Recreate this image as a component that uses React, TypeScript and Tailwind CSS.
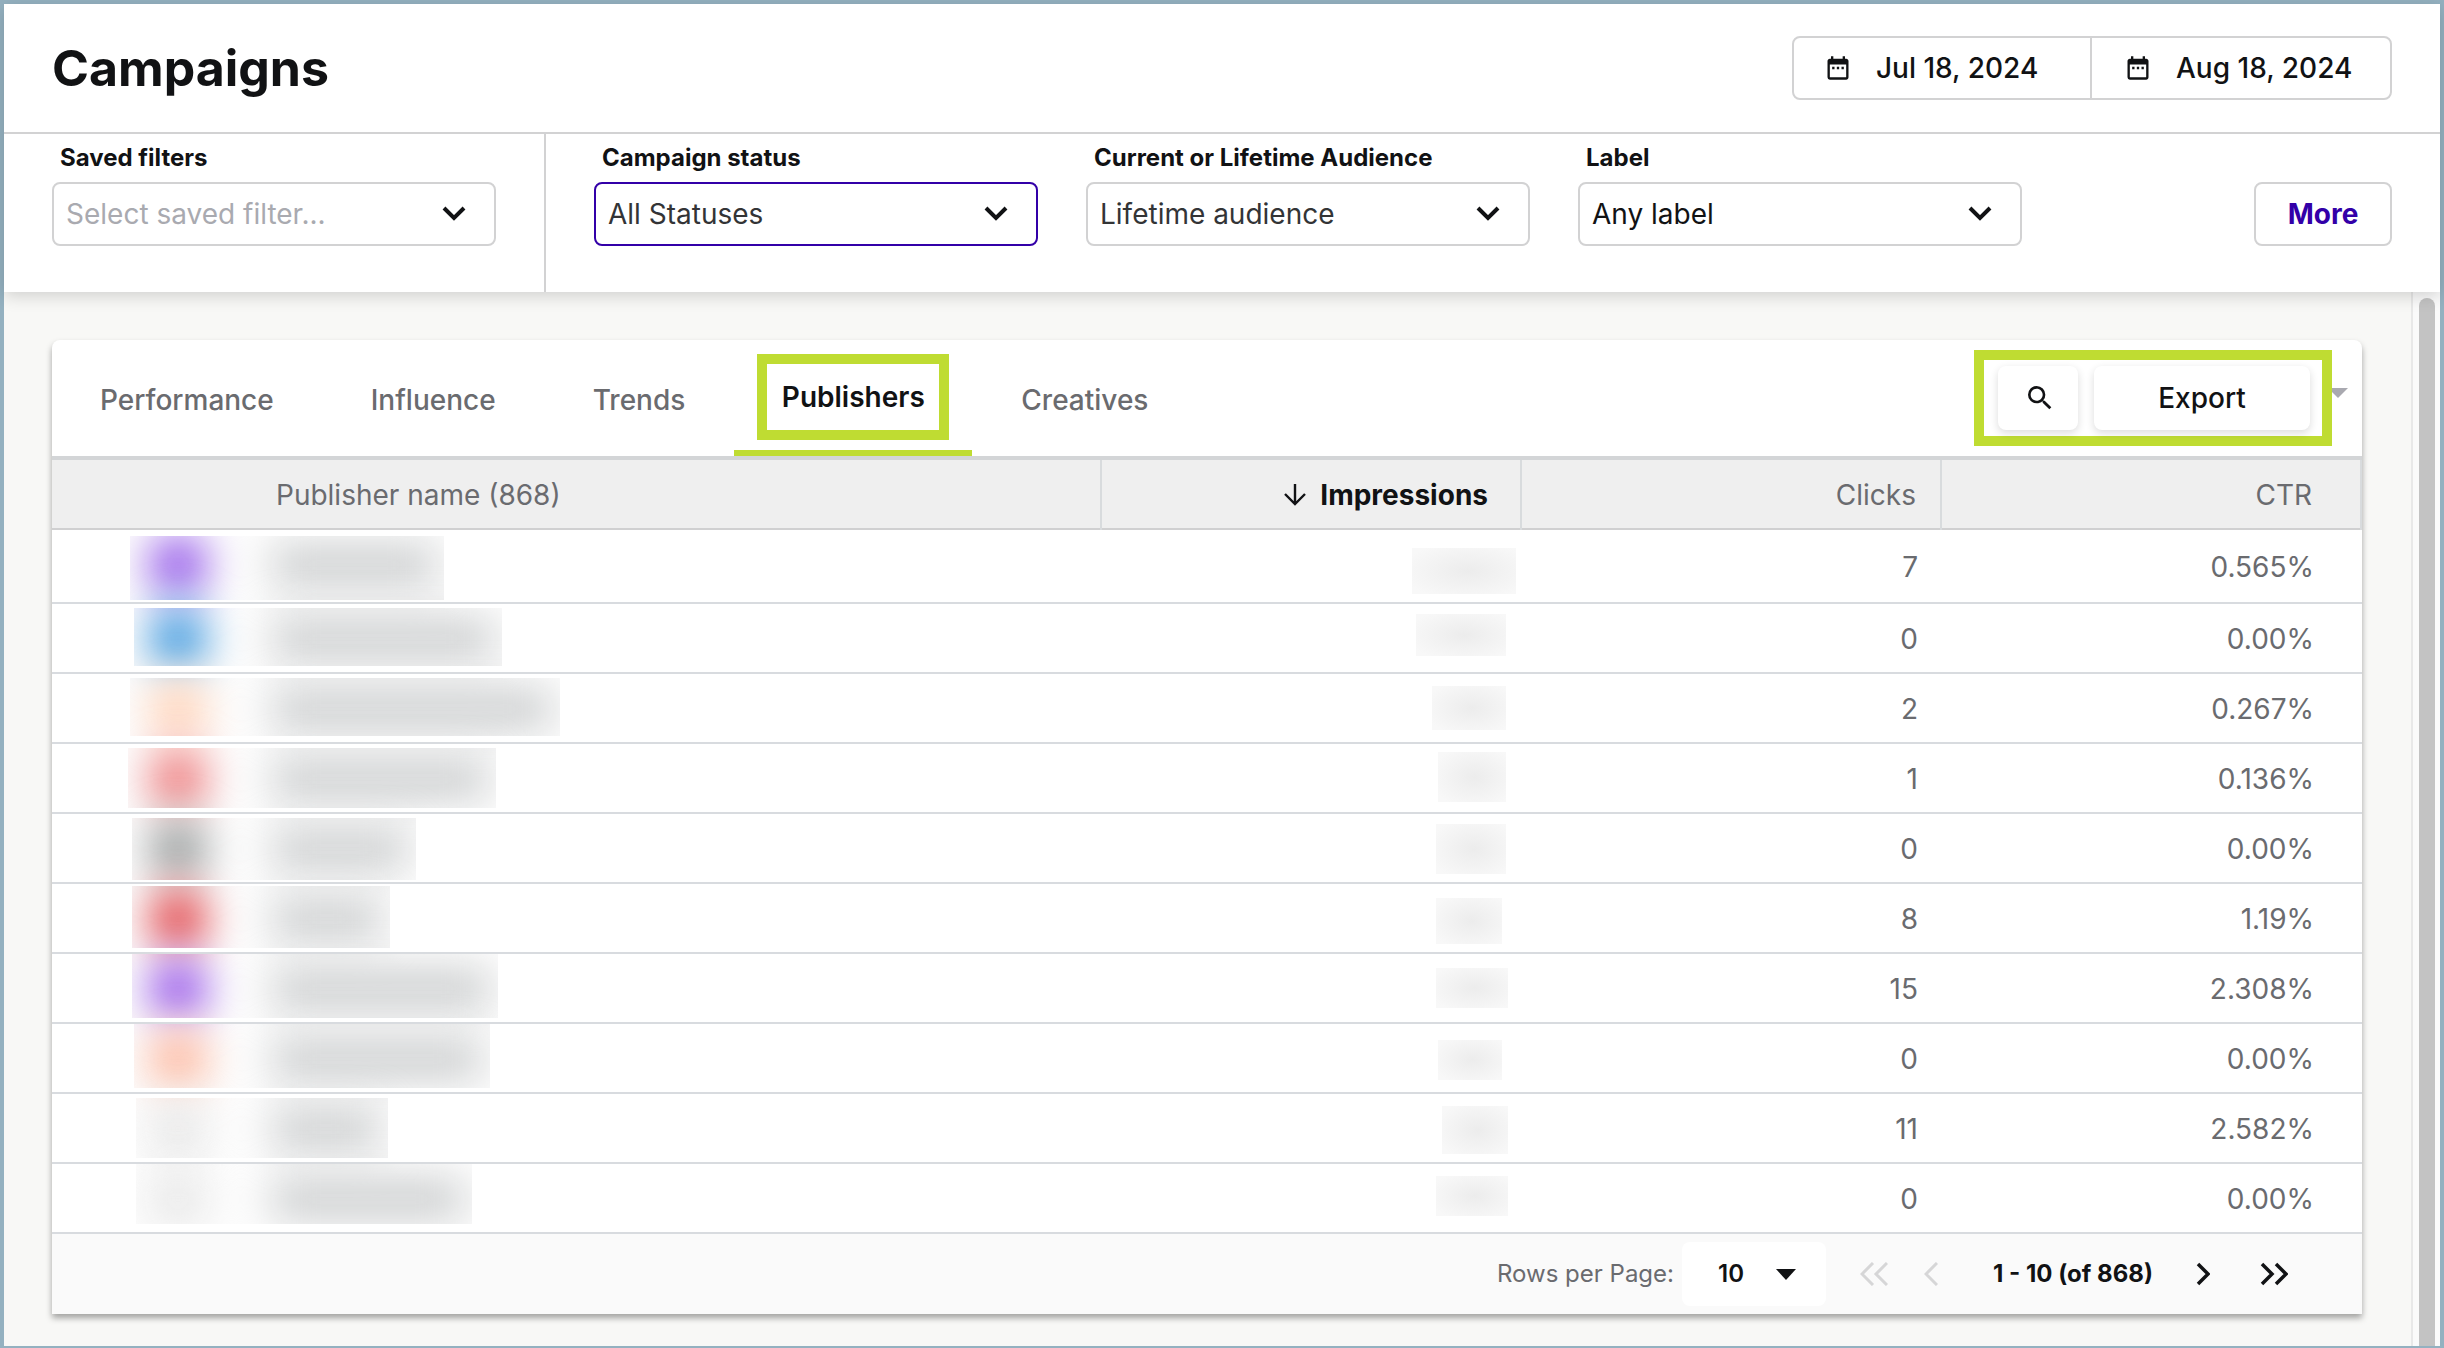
import { useId } from "react";
import { MdDateRange, MdSearch } from "react-icons/md";

const tabs = ["Performance", "Influence", "Trends", "Publishers", "Creatives"];

// Each patch is [left, top, width, height] inside its cell
type Patch = [number, number, number, number];

type Row = {
  avatar: string;
  height: string;
  name: Patch;
  impressions: Patch;
  clicks: string;
  ctr: string;
};

const rows: Row[] = [
  { avatar: "#9a62ea", height: "h-[74px]", name: [78, 6, 314, 64], impressions: [10, 18, 104, 46], clicks: "7", ctr: "0.565%" },
  { avatar: "#4a9fe0", height: "h-[70px]", name: [82, 4, 368, 58], impressions: [14, 10, 90, 42], clicks: "0", ctr: "0.00%" },
  { avatar: "#ffd6bd", height: "h-[70px]", name: [78, 4, 430, 58], impressions: [30, 12, 74, 44], clicks: "2", ctr: "0.267%" },
  { avatar: "#ee8385", height: "h-[70px]", name: [76, 4, 368, 60], impressions: [36, 8, 68, 50], clicks: "1", ctr: "0.136%" },
  { avatar: "#9fa3a3", height: "h-[70px]", name: [80, 4, 284, 62], impressions: [34, 10, 70, 50], clicks: "0", ctr: "0.00%" },
  { avatar: "#e25055", height: "h-[70px]", name: [80, 2, 258, 62], impressions: [34, 14, 66, 46], clicks: "8", ctr: "1.19%" },
  { avatar: "#9e62ea", height: "h-[70px]", name: [80, 0, 366, 64], impressions: [34, 14, 72, 40], clicks: "15", ctr: "2.308%" },
  { avatar: "#fdbda6", height: "h-[70px]", name: [82, 0, 356, 64], impressions: [36, 16, 64, 40], clicks: "0", ctr: "0.00%" },
  { avatar: "#e9e9e9", height: "h-[70px]", name: [84, 4, 252, 60], impressions: [40, 12, 66, 48], clicks: "11", ctr: "2.582%" },
  { avatar: "#e9e9e9", height: "h-[68px]", name: [84, 0, 336, 60], impressions: [34, 12, 72, 40], clicks: "0", ctr: "0.00%" },
];

function ChevronDown() {
  return (
    <svg viewBox="0 0 24 16" className="pointer-events-none absolute right-[30px] top-6 h-4 w-6" fill="none" stroke="#111214" strokeWidth="4">
      <path d="M2 2l10 10L22 2" />
    </svg>
  );
}

type FilterProps = {
  id: string;
  label: string;
  value: string;
  tone?: string;
  border?: string;
};

function Filter({ id, label, value, tone = "text-[#333436]", border = "border-[#d2d2d3]" }: FilterProps) {
  return (
    <div className="w-[444px]">
      <label htmlFor={id} className="block h-12 pl-2 pt-2 text-2xl font-bold text-[#111214]">
        {label}
      </label>
      <div className="relative">
        <select id={id} className={`h-16 w-full appearance-none rounded-lg border-2 bg-white pl-3 pr-16 text-[28px] ${tone} ${border}`}>
          <option>{value}</option>
        </select>
        <ChevronDown />
      </div>
    </div>
  );
}

// Blurred publisher logo and name; neighbouring logos bleed into the patch
function HiddenName({ index }: { index: number }) {
  const id = useId();
  const [x, y, w, h] = rows[index].name;
  const around = [index - 1, index, index + 1].filter((i) => rows[i]);
  return (
    <svg width="520" height="70" className="block" aria-hidden="true">
      <defs>
        <clipPath id={`${id}c`}>
          <rect x={x} y={y} width={w} height={h} />
        </clipPath>
        <filter
          id={`${id}b`}
          filterUnits="userSpaceOnUse"
          x="-20"
          y="-140"
          width="640"
          height="350"
          colorInterpolationFilters="sRGB"
        >
          <feGaussianBlur stdDeviation="20" />
        </filter>
      </defs>
      <g clipPath={`url(#${id}c)`}>
        <rect x={x} y={y} width={w} height={h} fill="#fdfdfd" />
        {around.map((i) => (
          <g key={i} filter={`url(#${id}b)`}>
            <circle cx="126" cy={35 + (i - index) * 70} r="31" fill={rows[i].avatar} />
            <rect x="220" y={15 + (i - index) * 70} width={rows[i].name[0] + rows[i].name[2] - 228} height="40" fill="#cccecf" />
          </g>
        ))}
      </g>
    </svg>
  );
}

function HiddenNumber({ patch }: { patch: Patch }) {
  const id = useId();
  const [x, y, w, h] = patch;
  return (
    <svg width="120" height="68" className="ml-auto block" aria-hidden="true">
      <radialGradient id={id} cx="54%" cy="50%" r="64%">
        <stop offset="0" stopColor="#ececec" />
        <stop offset="1" stopColor="#f8f8f8" />
      </radialGradient>
      <rect x={x} y={y} width={w} height={h} fill={`url(#${id})`} />
    </svg>
  );
}

function Header() {
  return (
    <header className="flex h-[130px] items-center justify-between border-b-2 border-[#d2d2d3] px-12">
      <h1 className="text-[50px] font-bold text-[#111214]">Campaigns</h1>
      <div className="flex h-16 rounded-lg border-2 border-[#d2d2d3] text-[28px] font-medium text-[#111214]">
        <button className="flex w-[298px] items-center gap-6 border-r-2 border-[#d2d2d3] pl-[30px]">
          <MdDateRange size={28} />
          Jul 18, 2024
        </button>
        <button className="flex w-[298px] items-center gap-6 pl-8">
          <MdDateRange size={28} />
          Aug 18, 2024
        </button>
      </div>
    </header>
  );
}

function Filters() {
  return (
    <section className="flex h-[158px] px-12">
      <div className="border-r-2 border-[#d2d2d3] pr-12">
        <Filter id="saved" label="Saved filters" value="Select saved filter..." tone="text-[#a9aab0]" />
      </div>
      <div className="flex gap-12 pl-12">
        <Filter id="status" label="Campaign status" value="All Statuses" border="border-[#3300a8]" />
        <Filter id="audience" label="Current or Lifetime Audience" value="Lifetime audience" />
        <Filter id="label" label="Label" value="Any label" tone="text-[#111214]" />
      </div>
      <button className="ml-auto mt-12 h-16 w-[138px] rounded-lg border-2 border-[#d2d2d3] text-[28px] font-bold text-[#3300a8]">
        More
      </button>
    </section>
  );
}

function TabBar() {
  return (
    <div className="flex h-[120px] border-b-4 border-[#d3d5d7]">
      <nav className="flex gap-px text-[28px] font-medium text-[#6a6b6f]">
        {tabs.map((tab) =>
          tab === "Publishers" ? (
            <a key={tab} href="#" className="flex w-[238px] justify-center border-b-[6px] border-[#bfdc32] pt-3.5 text-[#111214]">
              <span className="flex h-[86px] w-48 items-center justify-center border-[10px] border-[#bfdc32] font-semibold">
                {tab}
              </span>
            </a>
          ) : (
            <a key={tab} href="#" className="flex items-center px-12 pt-1">
              {tab}
            </a>
          )
        )}
      </nav>
      <div className="ml-auto flex items-start pr-3.5 pt-2.5">
        <div className="flex h-24 w-[358px] items-start gap-4 border-[10px] border-[#bfdc32] pl-3.5 pt-1.5">
          <button aria-label="Search" className="flex h-16 w-20 items-center justify-center rounded-lg bg-white pl-1 text-[#111214] shadow-[0_3px_8px_rgba(0,0,0,0.14)]">
            <MdSearch size={32} />
          </button>
          <button className="h-16 w-[216px] rounded-lg bg-white text-[28px] font-medium text-[#111214] shadow-[0_3px_8px_rgba(0,0,0,0.14)]">
            Export
          </button>
        </div>
        <svg viewBox="0 0 16 10" className="mt-[38px] h-2.5 w-4" fill="#a9a9b0">
          <path d="M0 0h16L6 10 0 4z" />
        </svg>
      </div>
    </div>
  );
}

function PublisherTable() {
  return (
    <table className="w-full table-fixed border-separate border-spacing-0 text-[28px] text-[#6a6b6f]">
      <thead>
        <tr className="h-[70px] bg-[#efefef] shadow-[inset_0_-2px_0_#d0d0d1]">
          <th className="w-5/11 border-r-2 border-[#d8dbdd] pl-56 text-left font-normal">Publisher name (868)</th>
          <th className="w-2/11 border-r-2 border-[#d8dbdd] pr-8 font-bold text-[#111214]">
            <span className="flex items-center justify-end gap-3.5">
              <svg viewBox="0 0 22 22" className="size-[22px]" fill="none" stroke="currentColor" strokeWidth="2.4">
                <path d="M11 0v20M1 10l10 10 10-10" />
              </svg>
              Impressions
            </span>
          </th>
          <th className="w-2/11 border-r-2 border-[#d8dbdd] pr-6 text-right font-normal">Clicks</th>
          <th className="w-2/11 border-r-2 border-[#d8dbdd] pr-12 text-right font-normal">CTR</th>
        </tr>
      </thead>
      <tbody>
        {rows.map((row, i) => (
          <tr key={i} className={`shadow-[inset_0_-2px_0_#d8dbdf] ${row.height}`}>
            <td className="p-0 align-top">
              <HiddenName index={i} />
            </td>
            <td className="p-0 align-top">
              <HiddenNumber patch={row.impressions} />
            </td>
            <td className="p-0 pr-6 text-right leading-8">{row.clicks}</td>
            <td className="p-0 pr-12 text-right leading-8">{row.ctr}</td>
          </tr>
        ))}
      </tbody>
    </table>
  );
}

function Pagination() {
  return (
    <footer className="flex h-20 items-center justify-end bg-[#fafafa] pr-[74px] text-2xl text-[#6a6b6f]">
      <label htmlFor="rows">Rows per Page:</label>
      <div className="relative ml-2 mr-[34px]">
        <select id="rows" className="h-16 w-36 appearance-none rounded-lg bg-white pl-9 font-semibold text-[#111214]">
          <option>10</option>
        </select>
        <svg viewBox="0 0 20 11" className="pointer-events-none absolute right-[30px] top-[27px] h-[11px] w-5" fill="#111214">
          <path d="M0 0h20L10 11z" />
        </svg>
      </div>
      <button aria-label="First page" className="text-[#d6d6d7]">
        <svg viewBox="0 0 28 24" className="h-6 w-7" fill="none" stroke="currentColor" strokeWidth="3">
          <path d="M13 1L2 12l11 11M27 1L16 12l11 11" />
        </svg>
      </button>
      <button aria-label="Previous page" className="ml-9 text-[#d6d6d7]">
        <svg viewBox="0 0 14 24" className="h-6 w-3.5" fill="none" stroke="currentColor" strokeWidth="3">
          <path d="M13 1L2 12l11 11" />
        </svg>
      </button>
      <span className="w-[258px] pl-3 text-center font-bold text-[#111214]">1 - 10 (of 868)</span>
      <button aria-label="Next page" className="text-[#111214]">
        <svg viewBox="0 0 14 24" className="h-6 w-3.5" fill="none" stroke="currentColor" strokeWidth="3.5">
          <path d="M2 2l10 10L2 22" />
        </svg>
      </button>
      <button aria-label="Last page" className="ml-[50px] text-[#111214]">
        <svg viewBox="0 0 28 24" className="h-6 w-7" fill="none" stroke="currentColor" strokeWidth="3.5">
          <path d="M2 2l10 10L2 22M16 2l10 10-10 10" />
        </svg>
      </button>
    </footer>
  );
}

export default function App() {
  return (
    <div className="flex min-h-screen flex-col border-4 border-[#94b1c0] bg-[#f8f8f6] font-['Inter',sans-serif]">
      <div className="relative bg-white shadow-[0_4px_16px_rgba(0,0,0,0.16)]">
        <Header />
        <Filters />
      </div>
      <div className="flex flex-1">
        <main className="flex-1 pb-8 pl-12 pr-[49px] pt-12">
          <div className="rounded-t-lg bg-white shadow-[0_4px_6px_rgba(0,0,0,0.35)]">
            <TabBar />
            <PublisherTable />
            <Pagination />
          </div>
        </main>
        {/* Scroll track */}
        <div className="flex w-[29px] justify-center border-l-2 border-[#e8e8e8] bg-[#fafafa] pt-1.5">
          <div className="w-4 rounded-t-full bg-[#c3c3c3]" />
        </div>
      </div>
    </div>
  );
}
